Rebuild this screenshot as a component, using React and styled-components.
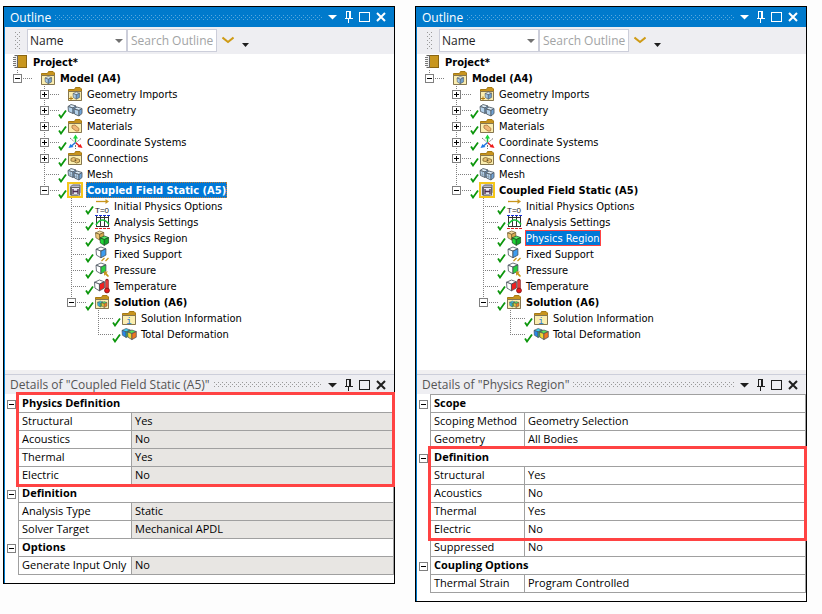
import React, { useState } from 'react';
import styled, { createGlobalStyle, css } from 'styled-components';

const GlobalStyle = createGlobalStyle`
  * { box-sizing: border-box; }
  body { margin: 0; background: #fdfdfd; }
  button, input, select { font: inherit; color: inherit; margin: 0; }
`;

const treeFont = '"DejaVu Sans Condensed", "DejaVu Sans", sans-serif';
const detailsFont = '"Open Sans", "Noto Sans", sans-serif';

const line = '#a0a0a0';
const blue = '#007acc';
const accent = '#ff4343';

const Page = styled.main`
  display: flex;
  align-items: flex-start;
  gap: 20px;
  padding: 6px 15px 12px 3px;
`;

const Panel = styled.section`
  flex: 1 1 0;
  min-width: 0;
  background: #fff;
  border: 1px solid #000;
`;

const PanelBody = styled.div`
  border-left: 1px solid ${blue};
  padding-bottom: 8px;
`;

const TitleBar = styled.header`
  display: flex;
  align-items: center;
  height: 20px;
  padding: 0 5px;
  font: 12px ${detailsFont};
  color: #fff;
  background: ${blue};
`;

const DetailsBar = styled(TitleBar)`
  color: #555;
  background: #eeeef2;
  border-top: 1px solid #ccceda;
`;

const Title = styled.h2`
  margin: 0;
  font: inherit;
  white-space: nowrap;
`;

const dots = (color) => css`
  background-image:
    conic-gradient(from 270deg at 1px 1px, ${color} 90deg, transparent 0),
    conic-gradient(from 270deg at 1px 1px, ${color} 90deg, transparent 0);
  background-size: 4px 4px;
  background-position: 0 0, 2px 2px;
`;

const Grip = styled.span`
  flex: 1;
  height: 5px;
  margin: 0 3px 0 4px;
  ${({ $active }) => dots($active ? '#59a8de' : '#999')}
`;

const IconButton = styled.button`
  display: grid;
  place-items: center;
  width: 16px;
  height: 16px;
  padding: 0;
  color: ${({ $active }) => ($active ? '#fff' : '#1e1e1e')};
  background: none;
  border: 0;
`;

const Toolbar = styled.div`
  display: flex;
  align-items: center;
  height: 27px;
  padding-left: 10px;
  font: 12px ${detailsFont};
  background: #eeeef2;
`;

const ToolbarGrip = styled.span`
  width: 5px;
  height: 17px;
  margin-right: 7px;
  ${dots('#999')}
`;

const SelectBox = styled.span`
  position: relative;
  width: 100px;
`;

const Select = styled.select`
  display: block;
  width: 100%;
  height: 23px;
  padding: 0 2px;
  color: #1e1e1e;
  background: #fff;
  border: 1px solid #ccceda;
  border-radius: 0;
  appearance: none;
`;

const SelectArrow = styled.svg`
  position: absolute;
  top: 10px;
  right: 4px;
  pointer-events: none;
`;

const Search = styled.input`
  width: 90px;
  height: 23px;
  padding: 0 0 0 3px;
  background: #fff;
  border: 1px solid #ccceda;

  &::placeholder { color: #a2a4a5; opacity: 1; }
`;

const ToolButton = styled(IconButton)`
  width: ${({ $wide }) => ($wide ? 22 : 12)}px;
  height: 23px;
`;

const Tree = styled.ul`
  margin: 0;
  padding: 0 0 28px;
  list-style: none;
  font: 11px/16px ${treeFont};
  color: #000;
`;

const TreeRow = styled.li`
  display: flex;
  height: 16px;
  padding-left: 8px;
  white-space: nowrap;
`;

const dottedDown = 'repeating-linear-gradient(#808080 0 1px, transparent 1px 2px)';
const dottedAcross = 'repeating-linear-gradient(90deg, #808080 0 1px, transparent 1px 2px)';

const Guide = styled.span`
  display: flex;
  align-items: center;
  flex: none;
  width: 27px;
  background-repeat: no-repeat;
  background-image: ${({ $down }) => ($down ? dottedDown : 'none')}, ${({ $across }) => ($across ? dottedAcross : 'none')};
  background-position: 4px 0, 4px 8px;
  background-size: 1px ${({ $down }) => ($down === 'half' ? '9px' : '16px')}, 16px 1px;
`;

const Expander = styled.button`
  flex: none;
  display: grid;
  place-items: center;
  width: 9px;
  height: 9px;
  padding: 0;
  color: #000;
  background: #fff;
  border: 1px solid #808080;
`;

const IconSlot = styled.span`
  position: relative;
  flex: none;
  width: 16px;
  height: 16px;
  margin-right: 3px;
`;

const Tick = styled.svg`
  position: absolute;
  top: 7px;
  left: -9px;
`;

const Label = styled.span`
  height: 16px;
  padding: 0 1px;
  line-height: 18px;
  font-weight: ${({ $bold }) => ($bold ? 700 : 400)};
  ${({ $selected }) => $selected && css`
    color: #fff;
    background: #0078d7;
    outline: 1px ${$selected === 'focus' ? 'dotted #c87a2b' : `solid ${accent}`};
    outline-offset: -1px;
  `}
`;

const Splitter = styled.div`
  height: 4px;
  background: #f0eff1;
`;

const Table = styled.table`
  width: 100%;
  margin-top: 1px;
  border-spacing: 0;
  table-layout: fixed;
  font: 11px/15px ${detailsFont};
  color: #000;
`;

const Group = styled.tbody`
  ${({ $marked }) => $marked && css`
    position: relative;
    z-index: 1;

    &::after {
      content: '';
      position: absolute;
      inset: -3px -1px -2px 11px;
      border: 3px solid ${accent};
      pointer-events: none;
    }
  `}
`;

const Gutter = styled.td`
  height: 18px;
  padding: 0 0 0 2px;
`;

const Cell = styled.td`
  height: 18px;
  padding: 0 3px 2px;
  text-align: left;
  font-weight: 400;
  white-space: nowrap;
  border-left: 1px solid ${line};
  border-bottom: 1px solid ${line};
  background: ${({ $shade }) => ($shade ? '#e8e6e3' : '#fff')};

  &:last-child { border-right: 1px solid ${line}; }
`;

const GroupCell = styled(Cell)`
  font-weight: 700;
  box-shadow: 0 -1px 0 ${line};
`;

/* ---------- icons ---------- */

const Cube = ({ x = 0, y = 0, s = 1, top = '#dcecf8', left = '#a8cbe8', right = '#6f9fcb', stroke = '#46505c' }) => (
  <g transform={`translate(${x} ${y}) scale(${s})`} stroke={stroke} strokeWidth={0.9} strokeLinejoin="round">
    <path d="M0 2.5 L5.5 0 L11 2 L5.5 4.5 Z" fill={top} />
    <path d="M0 2.5 L5.5 4.5 V12 L0.5 9 Z" fill={left} />
    <path d="M5.5 4.5 L11 2 V9 L5.5 12 Z" fill={right} />
  </g>
);

const Folder = ({ children }) => (
  <>
    <path d="M1.5 14 V3.500 H7.500 L8.500 1.500 H13 L14.500 3 V14 Z" fill="#c8941e" stroke="#a67a14" />
    <path d="M1.5 5.500 H14.500 V14.500 H1.500 Z" fill="#fbeeb0" stroke="#857650" />
    {children}
  </>
);

const Block = ({ x, y }) => (
  <g stroke="#56616c" strokeWidth="0.9" strokeLinejoin="round" transform={`translate(${x} ${y})`}>
    <path d="M0 2 L3 0 L8 1.500 L5 3.500 Z" fill="#dcecf8" />
    <path d="M0 2 L5 3.500 V9 L0.500 7 Z" fill="#b4d2ec" />
    <path d="M5 3.500 L8 1.500 V6.500 L5 9 Z" fill="#6fa4d8" />
  </g>
);

const glyphs = {
  project: (
    <>
      <rect x="4.5" y="1.5" width="9" height="12" fill="#c8961e" stroke="#8a6510" />
      <path d="M1.500 1.500 H4.500 V13.500 H1.500" fill="#eee" stroke="#666" />
      <path d="M0 3.500h3M0 5.500h3M0 7.500h3M0 9.500h3M0 11.500h3" stroke="#777" />
    </>
  ),
  model: <Folder><Cube x={5} y={6.5} s={0.6} /></Folder>,
  imports: (
    <Folder>
      <Cube x={6} y={6} s={0.6} />
      <path d="M2 12.500h4M4 10.500v4" stroke="#b07a10" />
    </Folder>
  ),
  geometry: <><Block x={1} y={2.5} /><Block x={7} y={5} /></>,
  materials: (
    <Folder>
      <path d="M5 7.500 L8 7 L12 10.500 L11.500 13 L9 13 L5 10 Z" fill="#f0b878" stroke="#b8844a" />
    </Folder>
  ),
  axes: (
    <>
      <path d="M3 4 L6.500 7 M14 4.500 L10.500 7.500 M8.500 11v4" stroke="#777" strokeDasharray="2 1" />
      <path d="M8.500 8.500 V3" stroke="#18b838" strokeWidth="1.500" />
      <path d="M8.500 0.500 L11 4.500 H6 Z" fill="#18d838" />
      <path d="M8.500 8.500 L12.500 12" stroke="#e02020" strokeWidth="1.500" />
      <path d="M15.500 14 L10.500 13 L13.500 10 Z" fill="#f01818" />
      <path d="M8.500 8.500 L4.500 12" stroke="#2878d8" strokeWidth="1.500" />
      <path d="M1.500 14 L3.500 10 L6.500 13 Z" fill="#1878e8" />
    </>
  ),
  connections: (
    <Folder>
      <path d="M4 8.500 L6.500 7.500 L9.500 8.500 L12.500 9.500 V12 L9.500 13 L7 11.500 L4 11 Z" fill="#e8c070" stroke="#94793c" />
      <circle cx="8.500" cy="10.300" r="1" fill="#6b5a2e" />
    </Folder>
  ),
  mesh: (
    <>
      <Block x={1} y={2.5} />
      <Block x={7} y={5} />
      <path d="M3.500 5.500v5M1 7.500l5 2M9.500 8v5M7 10l5 1.500" stroke="#7a8894" strokeWidth="0.500" />
    </>
  ),
  coupled: (
    <>
      <rect x="1" y="1" width="14" height="14" fill="#e4e4ee" stroke="#f5c71a" strokeWidth="2" />
      <path d="M3.500 5 L5.500 3 H13 V10.500 L11 13 H3.500 Z" fill="#b9b9c8" stroke="#666" />
      <rect x="4.500" y="5.500" width="8" height="7.500" fill="#e8e8f4" stroke="#666" />
      <path d="M6 7v5M11 7v5M6 9.500h5" stroke="#4a2c50" strokeWidth="1.300" />
    </>
  ),
  initial: (
    <>
      <path d="M2 3.500h11" stroke="#c8961e" strokeWidth="1.300" />
      <path d="M11.500 1 L15 3.500 L11.500 6" fill="#c8961e" />
      <text x="1" y="15" fontSize="8" fontFamily="Liberation Sans, sans-serif" fill="#222">T=0</text>
    </>
  ),
  settings: (
    <>
      <path d="M2.500 2v11M6.500 2v11M10.500 2v11M14.500 2v11M2 3.500h13M2 12.500h13" stroke="#333" fill="none" />
      <path d="M2 11 Q5 6 8.500 6 T15 10.500" fill="none" stroke="#18c038" strokeWidth="1.500" />
      <path d="M1 1.500h3M5 1.500h3M9 1.500h3M13 1.500h3" stroke="#1830e0" />
      <path d="M1 14.500h3M5 14.500h3M9 14.500h3M13 14.500h3" stroke="#e02020" />
    </>
  ),
  region: (
    <>
      <Cube x={1.5} y={1} s={0.75} top="#f6dca0" left="#eec878" right="#d8a84c" stroke="#6a5628" />
      <Cube x={6} y={6} s={0.78} top="#58e868" left="#20d838" right="#10a828" stroke="#184820" />
    </>
  ),
  support: (
    <>
      <Cube x={2} y={1} s={0.9} top="#fff" left="#fff" right="#3d9cf0" />
      <path d="M7.500 15l3-3M11.500 15l3-3" stroke="#c8961e" strokeWidth="1.300" />
    </>
  ),
  pressure: (
    <>
      <Cube x={2} y={1} s={0.9} top="#fff" left="#fff" right="#28d040" />
      <path d="M10 9.500h4L12.500 11l2.500 3-1 1-3-2.500-1 1.500z" fill="#c8961e" />
    </>
  ),
  temperature: (
    <>
      <Cube x={0.5} y={2} s={0.9} top="#fff" left="#fff" right="#f02020" />
      <path d="M13 2.500 V10" stroke="#901818" strokeWidth="3.400" strokeLinecap="round" />
      <path d="M13 3 V10" stroke="#f04040" strokeWidth="1.800" strokeLinecap="round" />
      <circle cx="13" cy="12.500" r="2.400" fill="#e81818" stroke="#901818" />
    </>
  ),
  solution: (
    <Folder>
      <Cube x={3.5} y={7} s={0.5} top="#40d0e8" left="#38b8e0" right="#40c048" />
      <Cube x={7.5} y={7.5} s={0.5} top="#58d858" left="#f0c830" right="#f08020" />
    </Folder>
  ),
  info: (
    <Folder>
      <text x="8" y="13.500" textAnchor="middle" fontSize="9" fontFamily="Liberation Mono, monospace" fill="#2c7ad0">i</text>
    </Folder>
  ),
  deformation: (
    <>
      <Cube x={1} y={2.5} s={0.75} top="#40d0f0" left="#2888e8" right="#30c860" />
      <Cube x={6.5} y={4} s={0.8} top="#58e058" left="#f0d830" right="#f07820" />
    </>
  ),
};

const Icon = ({ name }) => (
  <svg width="16" height="16" viewBox="0 0 16 16" aria-hidden="true">{glyphs[name]}</svg>
);

const PlusMinus = ({ open }) => (
  <svg width="7" height="7" viewBox="0 0 7 7" shapeRendering="crispEdges" aria-hidden="true">
    <path d={open ? 'M1 3.5h5' : 'M1 3.5h5M3.5 1v5'} stroke="currentColor" />
  </svg>
);

const WindowButtons = ({ active }) => (
  <>
    <IconButton $active={active} aria-label="Menu">
      <svg width="10" height="6" viewBox="0 0 10 6"><path d="M0 1h9L4.500 5.500z" fill="currentColor" /></svg>
    </IconButton>
    <IconButton $active={active} aria-label="Pin">
      <svg width="10" height="12" viewBox="0 0 10 12" fill="none" stroke="currentColor" shapeRendering="crispEdges">
        <path d="M2.500 7V.5h4V7M5.500 1v6M.5 7.500h8M4.500 8v4" />
      </svg>
    </IconButton>
    <IconButton $active={active} aria-label="Maximize">
      <svg width="12" height="12" viewBox="0 0 12 12" fill="none" stroke="currentColor" shapeRendering="crispEdges">
        <path d="M.5 1v9.500h10V1M0 1.500h11" />
        <path d="M0 1h11" />
      </svg>
    </IconButton>
    <IconButton $active={active} aria-label="Close">
      <svg width="10" height="10" viewBox="0 0 10 10" fill="none" stroke="currentColor" strokeWidth="2">
        <path d="M1 1l8 8M9 1l-8 8" />
      </svg>
    </IconButton>
  </>
);

/* ---------- data ---------- */

// guides: one letter per level, "|" runs on, "L" ends here, "." is empty
const rows = [
  { text: 'Project*', icon: 'project', bold: true, guides: '' },
  { text: 'Model (A4)', icon: 'model', bold: true, guides: 'L', open: true },
  { text: 'Geometry Imports', icon: 'imports', guides: '.|', open: false },
  { text: 'Geometry', icon: 'geometry', guides: '.|', open: false, ok: true },
  { text: 'Materials', icon: 'materials', guides: '.|', open: false, ok: true },
  { text: 'Coordinate Systems', icon: 'axes', guides: '.|', open: false, ok: true },
  { text: 'Connections', icon: 'connections', guides: '.|', open: false, ok: true },
  { text: 'Mesh', icon: 'mesh', guides: '.|', ok: true },
  { text: 'Coupled Field Static (A5)', icon: 'coupled', bold: true, guides: '.L', open: true, ok: true },
  { text: 'Initial Physics Options', icon: 'initial', guides: '..|', ok: true },
  { text: 'Analysis Settings', icon: 'settings', guides: '..|', ok: true },
  { text: 'Physics Region', icon: 'region', guides: '..|', ok: true },
  { text: 'Fixed Support', icon: 'support', guides: '..|', ok: true },
  { text: 'Pressure', icon: 'pressure', guides: '..|', ok: true },
  { text: 'Temperature', icon: 'temperature', guides: '..|', ok: true },
  { text: 'Solution (A6)', icon: 'solution', bold: true, guides: '..L', open: true, ok: true },
  { text: 'Solution Information', icon: 'info', guides: '...|', ok: true },
  { text: 'Total Deformation', icon: 'deformation', guides: '...L', ok: true },
];

const physics = [['Structural', 'Yes'], ['Acoustics', 'No'], ['Thermal', 'Yes'], ['Electric', 'No']];

const staticGroups = [
  { name: 'Physics Definition', marked: true, fields: physics },
  { name: 'Definition', fields: [['Analysis Type', 'Static'], ['Solver Target', 'Mechanical APDL']] },
  { name: 'Options', fields: [['Generate Input Only', 'No']] },
];

const regionGroups = [
  { name: 'Scope', fields: [['Scoping Method', 'Geometry Selection'], ['Geometry', 'All Bodies']] },
  { name: 'Definition', marked: true, fields: physics },
  { fields: [['Suppressed', 'No']] },
  { name: 'Coupling Options', fields: [['Thermal Strain', 'Program Controlled']] },
];

const TreeItem = ({ item, selected }) => {
  const last = item.guides.length - 1;
  const hasExpander = item.open !== undefined;
  return (
    <TreeRow>
      {item.guides.split('').map((mark, i) => (
        <Guide key={i} $down={mark === '|' ? 'full' : mark === 'L' && 'half'} $across={i === last}>
          {i === last && hasExpander && (
            <Expander aria-label={item.text} aria-expanded={item.open}>
              <PlusMinus open={item.open} />
            </Expander>
          )}
        </Guide>
      ))}
      <IconSlot>
        <Icon name={item.icon} />
        {item.ok && (
          <Tick width="9" height="10" viewBox="0 0 9 10" fill="none" stroke="#0c960c" strokeWidth="1.8" aria-hidden="true">
            <path d="M1 5.500 L3 8.500 L8 1.500" />
          </Tick>
        )}
      </IconSlot>
      <Label $bold={item.bold} $selected={selected}>{item.text}</Label>
    </TreeRow>
  );
};

const DetailsGroup = ({ group, shade }) => {
  const [open, setOpen] = useState(true);
  return (
    <Group $marked={group.marked}>
      {group.name && (
        <tr>
          <Gutter>
            <Expander aria-label={group.name} aria-expanded={open} onClick={() => setOpen(!open)}>
              <PlusMinus open={open} />
            </Expander>
          </Gutter>
          <GroupCell as="th" colSpan={2} scope="rowgroup">{group.name}</GroupCell>
        </tr>
      )}
      {open && group.fields.map(([name, value]) => (
        <tr key={name}>
          <Gutter />
          <Cell as="th" scope="row">{name}</Cell>
          <Cell $shade={shade}>{value}</Cell>
        </tr>
      ))}
    </Group>
  );
};

const GutterCol = styled.col`
  width: 13px;
`;

const NameCol = styled.col`
  width: ${({ $width }) => $width}px;
`;

const OutlinePanel = ({ selected, focus, title, groups, nameWidth, shade }) => (
  <Panel>
    <PanelBody>
      <TitleBar>
        <Title>Outline</Title>
        <Grip $active />
        <WindowButtons active />
      </TitleBar>
      <Toolbar>
        <ToolbarGrip />
        <SelectBox>
          <Select aria-label="Filter by" defaultValue="Name">
            <option>Name</option>
          </Select>
          <SelectArrow width="8" height="4" viewBox="0 0 8 4"><path d="M0 0h8L4 4z" fill="#717171" /></SelectArrow>
        </SelectBox>
        <Search type="text" placeholder="Search Outline" aria-label="Search Outline" />
        <ToolButton $wide aria-label="Expand">
          <svg width="12" height="9" viewBox="0 0 12 9" fill="none" stroke="#cf9b16" strokeWidth="2"><path d="M.5 1.500L6 6 11.500 1.500" /></svg>
        </ToolButton>
        <ToolButton aria-label="More">
          <svg width="8" height="13" viewBox="0 0 8 13"><path d="M1 9h7L4.500 13z" fill="currentColor" /></svg>
        </ToolButton>
      </Toolbar>
      <Tree>
        {rows.map((item) => (
          <TreeItem key={item.text} item={item} selected={item.text === selected && (focus ? 'focus' : 'plain')} />
        ))}
      </Tree>
      <Splitter />
      <DetailsBar>
        <Title>{title}</Title>
        <Grip />
        <WindowButtons />
      </DetailsBar>
      <Table>
        <colgroup>
          <GutterCol />
          <NameCol $width={nameWidth} />
          <col />
        </colgroup>
        {groups.map((group, i) => <DetailsGroup key={i} group={group} shade={shade} />)}
      </Table>
    </PanelBody>
  </Panel>
);

const App = () => (
  <>
    <GlobalStyle />
    <Page>
      <OutlinePanel
        selected="Coupled Field Static (A5)"
        focus
        title={'Details of "Coupled Field Static (A5)"'}
        groups={staticGroups}
        nameWidth={113}
        shade
      />
      <OutlinePanel
        selected="Physics Region"
        title={'Details of "Physics Region"'}
        groups={regionGroups}
        nameWidth={94}
      />
    </Page>
  </>
);

export default App;
